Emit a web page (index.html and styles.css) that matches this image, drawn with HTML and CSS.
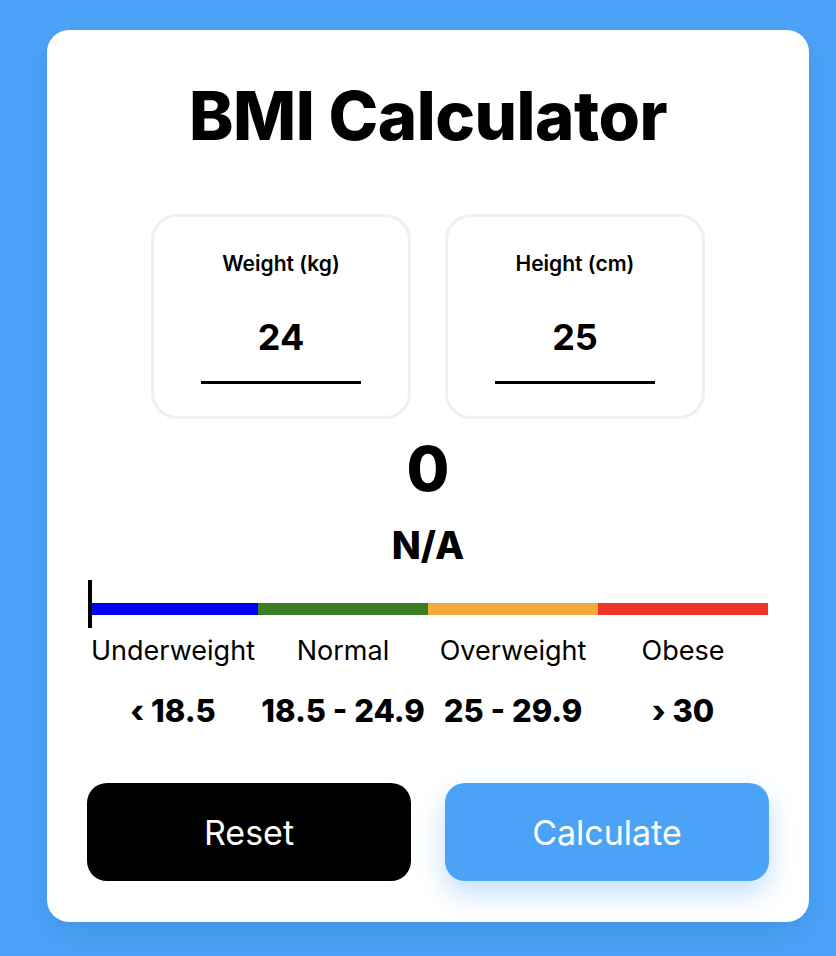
FILE: index.html
```html
<!DOCTYPE html>
<html lang="en">
<head>
<meta charset="utf-8">
<title>BMI Calculator</title>
<link rel="stylesheet" href="styles.css">
</head>
<body>
<main class="card">
  <h1 class="title">BMI Calculator</h1>
  <div class="inputs">
    <div class="field">
      <label class="field-label" for="weight">Weight (kg)</label>
      <input class="field-input" id="weight" type="text" value="24">
    </div>
    <div class="field">
      <label class="field-label" for="height">Height (cm)</label>
      <input class="field-input" id="height" type="text" value="25">
    </div>
  </div>
  <div class="bmi-value">0</div>
  <div class="bmi-status">N/A</div>
  <div class="scale">
    <div class="bar">
      <span class="seg seg-under"></span>
      <span class="seg seg-normal"></span>
      <span class="seg seg-over"></span>
      <span class="seg seg-obese"></span>
    </div>
    <span class="pointer"></span>
  </div>
  <div class="grid4 cat-labels">
    <span>Underweight</span>
    <span>Normal</span>
    <span>Overweight</span>
    <span>Obese</span>
  </div>
  <div class="grid4 cat-ranges">
    <span>&lsaquo; 18.5</span>
    <span>18.5 - 24.9</span>
    <span>25 - 29.9</span>
    <span>&rsaquo; 30</span>
  </div>
  <div class="buttons">
    <button class="btn btn-reset" type="button">Reset</button>
    <button class="btn btn-calc" type="button">Calculate</button>
  </div>
</main>
</body>
</html>
```
FILE: styles.css
```css
* { box-sizing: border-box; }
html, body { margin: 0; padding: 0; }
body {
  background: #4ba3f7;
  font-family: Inter, "Noto Sans", sans-serif;
  color: #000;
  min-height: 956px;
  padding: 30px 0 0 47px;
}
.card {
  width: 762px;
  background: #fff;
  border-radius: 22px;
  padding: 50px 41px 41px;
  box-shadow: 0 12px 30px rgba(20, 60, 120, 0.12);
}
.title {
  margin: 0;
  font-size: 67px;
  font-weight: 800;
  line-height: 72px;
  text-align: center;
  letter-spacing: -0.5px;
}
.inputs {
  margin-top: 62px;
  display: flex;
  justify-content: center;
  gap: 34px;
}
.field {
  width: 260px;
  height: 205px;
  border: 3px solid #f0f0f0;
  border-radius: 26px;
  display: flex;
  flex-direction: column;
  align-items: center;
}
.field-label {
  margin-top: 35px;
  font-size: 21px;
  font-weight: 600;
  line-height: 24px;
}
.field-input {
  margin-top: 41px;
  width: 160px;
  height: 67px;
  padding: 0 0 24px;
  border: none;
  border-bottom: 3px solid #000;
  font-family: inherit;
  font-size: 36px;
  font-weight: 700;
  line-height: 40px;
  text-align: center;
  outline: none;
  background: transparent;
  color: #000;
}
.bmi-value {
  margin-top: 15px;
  font-size: 62px;
  font-weight: 800;
  line-height: 70px;
  text-align: center;
}
.bmi-status {
  margin-top: 16px;
  font-size: 38px;
  font-weight: 800;
  line-height: 50px;
  text-align: center;
}
.scale {
  position: relative;
  margin-top: 10px;
  padding-top: 23px;
  height: 48px;
}
.bar {
  display: flex;
  height: 12px;
}
.seg { flex: 1; }
.seg-under { background: #0000f5; }
.seg-normal { background: #3a7d22; }
.seg-over { background: #f2aa3c; }
.seg-obese { background: #ed3626; }
.pointer {
  position: absolute;
  left: 0;
  top: 0;
  width: 4px;
  height: 48px;
  background: #000;
}
.grid4 {
  display: grid;
  grid-template-columns: repeat(4, 1fr);
  text-align: center;
}
.cat-labels {
  margin-top: 6px;
  font-size: 27px;
  font-weight: 400;
  line-height: 34px;
  white-space: nowrap;
}
.cat-ranges {
  margin-top: 23px;
  font-size: 31px;
  font-weight: 800;
  line-height: 40px;
  white-space: nowrap;
}
.buttons {
  margin: 52px -1px 0;
  display: flex;
  gap: 34px;
}
.btn {
  flex: 1;
  height: 98px;
  border: none;
  border-radius: 20px;
  font-family: inherit;
  font-size: 34px;
  font-weight: 400;
  color: #fff;
  cursor: pointer;
}
.btn-reset { background: #000; }
.btn-calc {
  background: #4ba3f7;
  box-shadow: 0 12px 28px rgba(75, 163, 247, 0.35);
}
```
